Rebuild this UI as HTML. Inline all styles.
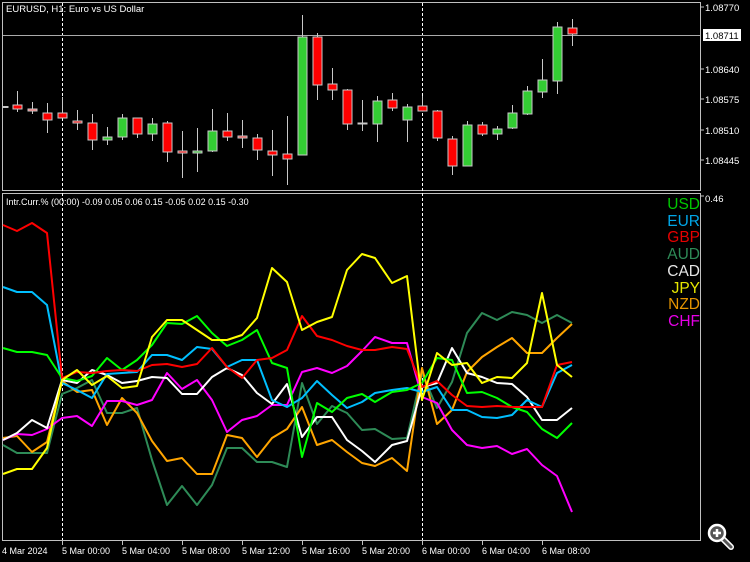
<!DOCTYPE html>
<html><head><meta charset="utf-8"><style>
html,body{margin:0;padding:0;background:#000;width:750px;height:562px;overflow:hidden}
svg{display:block}
text{font-family:"Liberation Sans",sans-serif}
</style></head><body>
<svg width="750" height="562" viewBox="0 0 750 562" xmlns="http://www.w3.org/2000/svg">
<rect width="750" height="562" fill="#000"/>
<!-- panels -->
<rect x="2.5" y="2.5" width="698" height="188" fill="none" stroke="#c0c0c0" stroke-width="1"/>
<rect x="2.5" y="193.5" width="698" height="347" fill="none" stroke="#c0c0c0" stroke-width="1"/>
<line x1="62.5" y1="3" x2="62.5" y2="540" stroke="#fff" stroke-dasharray="3,2"/>
<line x1="422.5" y1="3" x2="422.5" y2="540" stroke="#fff" stroke-dasharray="3,2"/>
<line x1="3" y1="35.5" x2="700" y2="35.5" stroke="#aaa"/>
<text x="6" y="12" fill="#fff" font-size="9.5">EURUSD, H1:  Euro vs US Dollar</text>
<!-- price axis -->
<g fill="#fff" font-size="9.5">
<text x="705" y="11">1.08770</text>
<text x="705" y="73">1.08640</text>
<text x="705" y="103">1.08575</text>
<text x="705" y="134">1.08510</text>
<text x="705" y="164">1.08445</text>
<text x="705" y="202">0.46</text>
</g>
<g stroke="#c0c0c0"><line x1="700" y1="7" x2="704" y2="7"/><line x1="700" y1="69" x2="704" y2="69"/><line x1="700" y1="99" x2="704" y2="99"/><line x1="700" y1="130" x2="704" y2="130"/><line x1="700" y1="160" x2="704" y2="160"/><line x1="700" y1="196" x2="704" y2="196"/></g>
<rect x="703" y="29" width="38" height="12" fill="#fff"/>
<text x="705" y="39" fill="#000" font-size="9.5">1.08711</text>
<!-- candles -->
<g id="c" stroke="#c8c8c8" stroke-width="1">
<line x1="5" y1="107" x2="5" y2="107"/><rect x="3" y="106.5" width="5" height="1" fill="#fff"/>
<line x1="17.5" y1="91" x2="17.5" y2="112"/><rect x="13" y="105" width="9" height="4" fill="#f00"/>
<line x1="32.5" y1="102" x2="32.5" y2="114"/><rect x="28" y="109" width="9" height="2" fill="#f66"/>
<line x1="47.5" y1="103" x2="47.5" y2="133"/><rect x="43" y="113" width="9" height="7" fill="#f00"/>
<line x1="62.5" y1="97" x2="62.5" y2="118"/><rect x="58" y="113" width="9" height="5" fill="#f00"/>
<line x1="77.5" y1="110" x2="77.5" y2="130"/><rect x="73" y="121" width="9" height="2" fill="#f00"/>
<line x1="92.5" y1="114" x2="92.5" y2="150"/><rect x="88" y="123" width="9" height="17" fill="#f00"/>
<line x1="107.5" y1="127" x2="107.5" y2="145"/><rect x="103" y="137" width="9" height="3" fill="#3c3"/>
<line x1="122.5" y1="114" x2="122.5" y2="140"/><rect x="118" y="118" width="9" height="19" fill="#3c3"/>
<line x1="137.5" y1="118" x2="137.5" y2="138"/><rect x="133" y="118" width="9" height="16" fill="#f00"/>
<line x1="152.5" y1="118" x2="152.5" y2="141"/><rect x="148" y="124" width="9" height="10" fill="#3c3"/>
<line x1="167.5" y1="121" x2="167.5" y2="162"/><rect x="163" y="123" width="9" height="29" fill="#f00"/>
<line x1="182.5" y1="131" x2="182.5" y2="178"/><rect x="178" y="151" width="9" height="2" fill="#f00"/>
<line x1="197.5" y1="128" x2="197.5" y2="172"/><rect x="193" y="151" width="9" height="2" fill="#3c3"/>
<line x1="212.5" y1="109" x2="212.5" y2="152"/><rect x="208" y="131" width="9" height="20" fill="#3c3"/>
<line x1="227.5" y1="113" x2="227.5" y2="141"/><rect x="223" y="131" width="9" height="6" fill="#f00"/>
<line x1="242.5" y1="120" x2="242.5" y2="148"/><rect x="238" y="136" width="9" height="2" fill="#f44"/>
<line x1="257.5" y1="134" x2="257.5" y2="160"/><rect x="253" y="138" width="9" height="12" fill="#f00"/>
<line x1="272.5" y1="130" x2="272.5" y2="176"/><rect x="268" y="151" width="9" height="4" fill="#f00"/>
<line x1="287.5" y1="116" x2="287.5" y2="185"/><rect x="283" y="154" width="9" height="5" fill="#f00"/>
<line x1="302.5" y1="15" x2="302.5" y2="37"/><rect x="298" y="37" width="9" height="118" fill="#3c3"/>
<line x1="317.5" y1="33" x2="317.5" y2="100"/><rect x="313" y="37" width="9" height="48" fill="#f00"/>
<line x1="332.5" y1="68" x2="332.5" y2="100"/><rect x="328" y="84" width="9" height="6" fill="#f00"/>
<line x1="347.5" y1="89" x2="347.5" y2="130"/><rect x="343" y="90" width="9" height="34" fill="#f00"/>
<line x1="362.5" y1="100" x2="362.5" y2="131"/><rect x="358" y="123" width="9" height="1" fill="#fff"/>
<line x1="377.5" y1="96" x2="377.5" y2="142"/><rect x="373" y="101" width="9" height="23" fill="#3c3"/>
<line x1="392.5" y1="93" x2="392.5" y2="111"/><rect x="388" y="100" width="9" height="8" fill="#f00"/>
<line x1="407.5" y1="104" x2="407.5" y2="142"/><rect x="403" y="107" width="9" height="13" fill="#3c3"/>
<line x1="422.5" y1="96" x2="422.5" y2="111"/><rect x="418" y="106" width="9" height="5" fill="#f00"/>
<line x1="437.5" y1="110" x2="437.5" y2="141"/><rect x="433" y="111" width="9" height="27" fill="#f00"/>
<line x1="452.5" y1="136" x2="452.5" y2="175"/><rect x="448" y="139" width="9" height="27" fill="#f00"/>
<line x1="467.5" y1="121" x2="467.5" y2="166"/><rect x="463" y="125" width="9" height="41" fill="#3c3"/>
<line x1="482.5" y1="122" x2="482.5" y2="136"/><rect x="478" y="125" width="9" height="9" fill="#f00"/>
<line x1="497.5" y1="126" x2="497.5" y2="140"/><rect x="493" y="129" width="9" height="5" fill="#3c3"/>
<line x1="512.5" y1="105" x2="512.5" y2="129"/><rect x="508" y="113" width="9" height="15" fill="#3c3"/>
<line x1="527.5" y1="86" x2="527.5" y2="115"/><rect x="523" y="91" width="9" height="23" fill="#3c3"/>
<line x1="542.5" y1="59" x2="542.5" y2="98"/><rect x="538" y="80" width="9" height="12" fill="#3c3"/>
<line x1="557.5" y1="22" x2="557.5" y2="94"/><rect x="553" y="27" width="9" height="54" fill="#3c3"/>
<line x1="572.5" y1="19" x2="572.5" y2="46"/><rect x="568" y="28" width="9" height="6" fill="#f00"/>
</g>
<!-- indicator lines -->
<g fill="none" stroke-width="2" stroke-linejoin="round">
<polyline stroke="#2e8b57" points="3,445 17,453 32,453 47,453 62,394 77,388 92,380 107,413 122,413 137,408 152,460 167,505 182,486 197,505 212,485 227,448 242,448 257,462 272,462 287,467 302,383 317,424 332,406 347,413 362,430 375,429 392,439 407,438 422,373 437,408 452,382 467,333 482,313 497,320 512,312 527,315 542,323 557,315 572,323"/>
<polyline stroke="#ffa500" points="3,438 17,436 32,452 47,442 62,381 77,392 92,390 107,425 122,398 137,413 152,441 167,461 182,458 197,474 212,474 227,435 242,438 257,457 272,438 287,429 302,407 317,445 332,440 347,452 362,463 375,466 392,458 407,471 422,368 437,424 452,410 467,372 482,357 497,347 512,338 527,353 542,353 557,338 572,324"/>
<polyline stroke="#ff00ff" points="3,440 17,434 32,435 47,429 62,418 77,416 92,426 107,401 122,401 137,405 152,400 167,373 182,389 197,380 212,400 227,432 242,420 257,416 272,405 287,405 302,372 317,368 332,373 347,366 362,351 375,337 392,343 407,343 422,397 437,403 452,430 467,445 482,448 497,446 512,454 527,449 542,465 557,476 572,512"/>
<polyline stroke="#fff" points="3,440 17,433 32,420 47,428 62,380 77,383 92,370 107,375 122,383 137,381 152,377 167,378 182,394 197,394 212,377 227,368 242,375 257,393 272,404 287,384 302,437 317,417 332,417 347,440 362,451 375,462 392,445 407,441 422,387 437,383 452,348 467,373 482,377 497,383 512,384 527,397 542,420 557,420 572,408"/>
<polyline stroke="#00bfff" points="3,287 17,292 32,292 47,305 62,383 77,390 92,398 107,374 122,373 137,372 152,355 167,355 182,360 197,347 212,349 227,367 242,360 257,360 272,400 287,407 302,398 317,381 332,395 347,408 362,402 375,393 392,390 407,388 422,392 437,387 452,410 467,410 482,417 497,418 512,415 527,400 542,407 557,373 572,365"/>
<polyline stroke="#00ff00" points="3,348 17,352 32,352 47,355 62,378 77,381 92,376 107,358 122,370 137,360 152,345 167,323 182,324 197,316 212,333 227,346 242,340 257,330 272,363 287,368 302,457 317,403 332,412 347,398 362,394 375,402 392,392 407,390 422,383 437,358 452,360 467,393 482,392 497,398 512,407 527,412 542,429 557,438 572,423"/>
<polyline stroke="#ff0000" points="3,225 17,231 32,223 47,233 62,378 77,372 92,373 107,371 122,370 137,371 152,365 167,364 182,367 197,364 212,348 227,367 242,378 257,360 272,358 287,350 302,316 317,336 332,340 347,346 362,350 375,350 392,347 407,349 422,387 437,381 452,395 467,406 482,407 497,406 512,407 527,407 542,407 557,365 572,362"/>
<polyline stroke="#ffff00" points="3,474 17,469 32,469 47,448 62,380 77,370 92,385 107,376 122,388 137,386 152,337 167,320 182,320 197,330 212,340 227,340 242,335 257,318 272,268 287,282 302,330 317,322 332,317 347,270 362,254 375,258 392,283 407,276 422,400 437,353 452,365 467,363 482,383 497,377 512,378 527,363 542,293 557,365 572,377"/>
</g>
<text x="6" y="205" fill="#fff" font-size="9">Intr.Curr.% (00:00) -0.09 0.05 0.06 0.15 -0.05 0.02 0.15 -0.30</text>
<!-- legend -->
<g font-size="15.5" text-anchor="end">
<text x="700" y="209" fill="#00c800">USD</text>
<text x="700" y="226" fill="#00a5e6">EUR</text>
<text x="700" y="242" fill="#e60000">GBP</text>
<text x="700" y="259" fill="#2e8b57">AUD</text>
<text x="700" y="276" fill="#e6e6e6">CAD</text>
<text x="700" y="293" fill="#e6e600">JPY</text>
<text x="700" y="309" fill="#e69500">NZD</text>
<text x="700" y="326" fill="#e600e6">CHF</text>
</g>
<!-- time axis -->
<g stroke="#c0c0c0"><line x1="62.5" y1="541" x2="62.5" y2="545"/><line x1="122.5" y1="541" x2="122.5" y2="545"/><line x1="182.5" y1="541" x2="182.5" y2="545"/><line x1="242.5" y1="541" x2="242.5" y2="545"/><line x1="302.5" y1="541" x2="302.5" y2="545"/><line x1="362.5" y1="541" x2="362.5" y2="545"/><line x1="422.5" y1="541" x2="422.5" y2="545"/><line x1="482.5" y1="541" x2="482.5" y2="545"/><line x1="542.5" y1="541" x2="542.5" y2="545"/></g>
<g fill="#fff" font-size="9">
<text x="2" y="554">4 Mar 2024</text>
<text x="62" y="554">5 Mar 00:00</text>
<text x="122" y="554">5 Mar 04:00</text>
<text x="182" y="554">5 Mar 08:00</text>
<text x="242" y="554">5 Mar 12:00</text>
<text x="302" y="554">5 Mar 16:00</text>
<text x="362" y="554">5 Mar 20:00</text>
<text x="422" y="554">6 Mar 00:00</text>
<text x="482" y="554">6 Mar 04:00</text>
<text x="542" y="554">6 Mar 08:00</text>
</g>
<!-- zoom icon -->
<line x1="722" y1="538" x2="731" y2="547" stroke="#fff" stroke-width="6" stroke-linecap="round"/>
<line x1="722" y1="538" x2="731" y2="547" stroke="#555" stroke-width="3" stroke-linecap="round"/>
<circle cx="717" cy="533" r="8" fill="#555" stroke="#fff" stroke-width="2.5"/>
<path d="M717 529v8M713 533h8" stroke="#fff" stroke-width="2.5"/>
</svg>
</body></html>
